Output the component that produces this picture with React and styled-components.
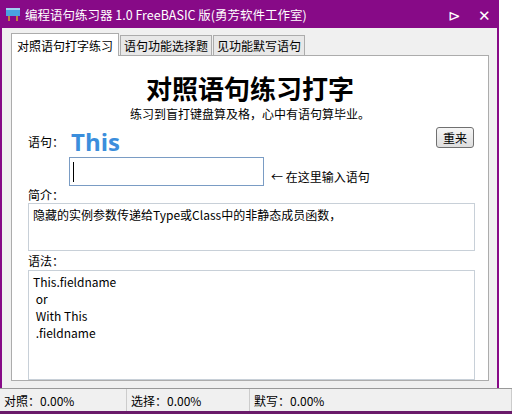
import React from "react";
import styled, { createGlobalStyle } from "styled-components";

const G = createGlobalStyle`
  body { margin:0; background:#fff; font-family:"Microsoft YaHei","Noto Sans CJK SC","Noto Sans",sans-serif; font-size:12px; color:#000; }
`;
const Page = styled.div`width:519px;height:417px;overflow:hidden;display:flex;flex-direction:column;background:#fff;`;
const Win = styled.div`width:499px;height:388px;box-sizing:border-box;background:#870a87;padding:0 2px 0 2px;display:flex;flex-direction:column;`;
const Title = styled.div`height:28px;display:flex;align-items:center;color:#fff;font-size:12.5px;gap:4px;padding-left:3px;`;
const Spacer = styled.div`flex:1;`;
const Ctl = styled.span`font-size:15px;width:26px;text-align:center;font-weight:300;`;
const Body = styled.div`flex:1;background:#f0f0f0;padding:4px 8px 0 9px;display:flex;flex-direction:column;`;
const Tabs = styled.div`display:flex;align-items:flex-end;height:23px;`;
const Tab = styled.div`box-sizing:border-box;height:${p=>p.$a?23:20}px;padding:0 ${p=>p.$a?5:3}px;border:1px solid #acacac;border-bottom:none;background:${p=>p.$a?"#fff":"#e8e8e8"};display:flex;align-items:center;font-size:12px;margin-right:1px;position:relative;top:${p=>p.$a?1:0}px;`;
const Panel = styled.div`height:326px;width:478px;box-sizing:border-box;background:#fff;border:1px solid #acacac;display:flex;flex-direction:column;padding:0 0 0 16px;overflow:hidden;`;
const H1 = styled.div`text-align:center;font-size:26px;font-weight:bold;margin-top:14px;line-height:36px;padding-right:16px;`;
const Sub = styled.div`text-align:center;font-size:12px;line-height:16px;margin-bottom:3px;padding-right:16px;`;
const Row = styled.div`display:flex;align-items:center;height:${p=>p.$h}px;`;
const Lbl = styled.span`font-size:12px;width:${p=>p.$w||"auto"};`;
const Word = styled.span`color:#3b8edc;font-weight:bold;font-size:24px;font-family:"Open Sans",sans-serif;`;
const Btn = styled.button`margin-left:auto;margin-right:14px;margin-bottom:8px;width:38px;height:21px;font-size:12px;border:1px solid #707070;border-radius:3px;background:linear-gradient(#f6f6f6,#dedede);padding:0;font-family:inherit;`;
const Input = styled.div`width:195px;height:29px;box-sizing:border-box;border:1px solid #7a9cc4;margin-left:41px;display:flex;align-items:center;padding-left:3px;`;
const Caret = styled.div`width:1px;height:20px;background:#000;`;
const Hint = styled.span`margin-left:7px;margin-top:9px;font-size:12px;`;
const Box = styled.div`width:447px;height:${p=>p.$h}px;box-sizing:border-box;border:1px solid #c8d0d8;padding:2px 4px;font-size:12px;line-height:17px;white-space:pre;flex-shrink:0;`;
const Status = styled.div`height:22px;background:#f0f0f0;border-top:1px solid #999;display:flex;font-size:12px;border-bottom:3px solid #6a1a6a;width:512px;`;
const Cell = styled.div`width:${p=>p.$w}px;border-right:1px solid #ccc;display:flex;align-items:center;padding-left:4px;box-sizing:border-box;`;

export default function App(){
  return <Page><G/>
    <Win>
      <Title>
        <svg width="16" height="16" viewBox="0 0 16 16"><rect x="1" y="2" width="14" height="8" fill="#4aa3e0"/><rect x="1" y="2" width="14" height="2" fill="#a0d0f0"/><rect x="3" y="10" width="2" height="5" fill="#c08040"/><rect x="11" y="10" width="2" height="5" fill="#c08040"/></svg>
        <span>编程语句练习器 1.0 FreeBASIC 版(勇芳软件工作室)</span>
        <Spacer/><Ctl>⊳</Ctl><Ctl>✕</Ctl>
      </Title>
      <Body>
        <Tabs><Tab $a>对照语句打字练习</Tab><Tab>语句功能选择题</Tab><Tab>见功能默写语句</Tab></Tabs>
        <Panel>
          <H1>对照语句练习打字</H1>
          <Sub>练习到盲打键盘算及格，心中有语句算毕业。</Sub>
          <Row $h={32}><Lbl $w="43px">语句：</Lbl><Word>This</Word><Btn>重来</Btn></Row>
          <Row $h={30}><Input><Caret/></Input><Hint>← 在这里输入语句</Hint></Row>
          <Row $h={22}><Lbl>简介：</Lbl></Row>
          <Box $h={48}>隐藏的实例参数传递给Type或Class中的非静态成员函数，</Box>
          <Row $h={24}><Lbl>语法：</Lbl></Row>
          <Box $h={110}>{"This.fieldname\n or\n With This\n .fieldname"}</Box>
        </Panel>
      </Body>
    </Win>
    <Status><Cell $w={127}>对照：0.00%</Cell><Cell $w={123}>选择：0.00%</Cell><Cell $w={262}>默写：0.00%</Cell></Status>
  </Page>;
}
